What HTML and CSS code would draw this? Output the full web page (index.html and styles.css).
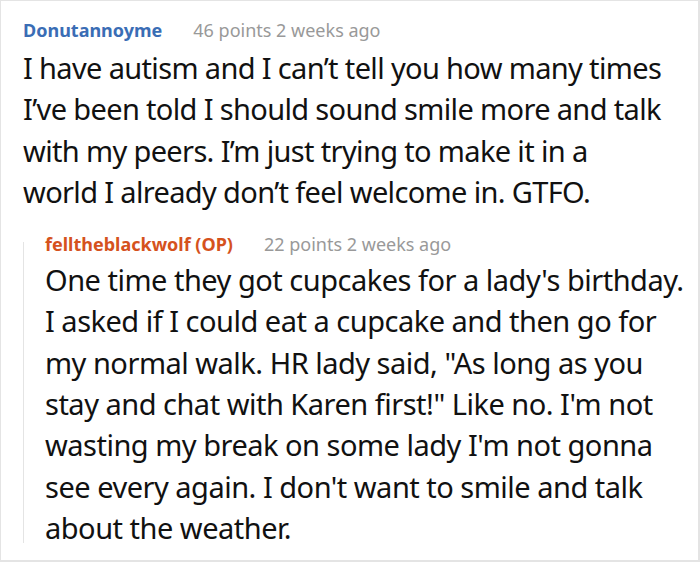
FILE: index.html
```html
<!DOCTYPE html>
<html>
<head>
<meta charset="utf-8">
<link rel="stylesheet" href="styles.css">
</head>
<body>
<div class="frame">
  <div class="comment">
    <div class="head"><span class="user">Donutannoyme</span><span class="meta">46 points 2 weeks ago</span></div>
    <div class="text">I have autism and I can’t tell you how many times I’ve been told I should sound smile more and talk with my peers. I’m just trying to make it in a<br>world I already don’t feel welcome in. GTFO.</div>
    <div class="reply">
      <div class="head"><span class="user op">felltheblackwolf (OP)</span><span class="meta">22 points 2 weeks ago</span></div>
      <div class="text">One time they got cupcakes for a lady's birthday. I asked if I could eat a cupcake and then go for my normal walk. HR lady said, "As long as you stay and chat with Karen first!" Like no. I'm not wasting my break on some lady I'm not gonna see every again. I don't want to smile and talk about the weather.</div>
    </div>
  </div>
</div>
</body>
</html>
```
FILE: styles.css
```css
html, body { margin: 0; padding: 0; background: #fff; }
.frame {
  width: 700px;
  height: 562px;
  box-sizing: border-box;
  border: 1px solid #e4e4e4;
  border-right-width: 2px;
  border-bottom-width: 2px;
  padding: 17px 14px 0 22px;
  font-family: "Noto Sans", sans-serif;
  overflow: hidden;
}
.head { display: flex; gap: 31px; font-size: 18px; line-height: 24px; }
.user { font-weight: bold; color: #3a6db5; }
.user.op { color: #d5521d; }
.meta { color: #999; }
.text { font-size: 29px; line-height: 41.3px; color: #111; margin-top: 5px; letter-spacing: -0.5px; }
.comment > .text { letter-spacing: -0.65px; }
.reply {
  position: relative;
  margin-top: 20px;
  padding-left: 22px;
}
.reply::before {
  content: "";
  position: absolute;
  left: 0;
  top: 10px;
  bottom: 5px;
  width: 1px;
  background: #e4e4e4;
}
.reply .text { margin-top: 3px; }
```
